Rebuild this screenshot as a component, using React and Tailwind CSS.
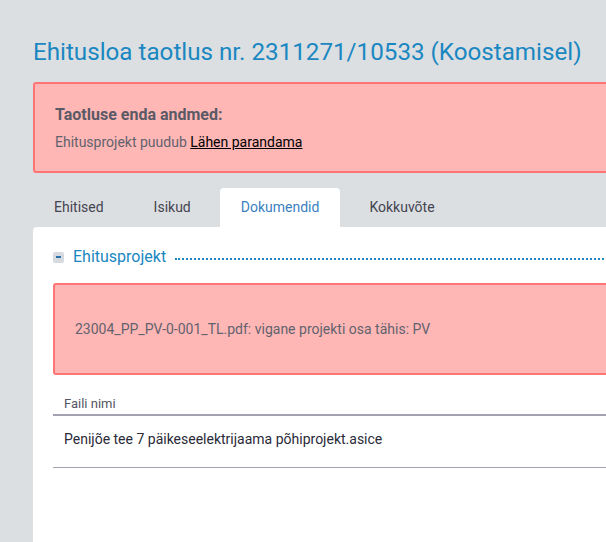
import React from 'react'

const tabs = ['Ehitised', 'Isikud', 'Dokumendid', 'Kokkuvõte']

const App = () => {
  const active = 'Dokumendid'

  return (
    <div className="min-h-[542px] w-[606px] overflow-hidden bg-[#dcdfe2] font-['Roboto',sans-serif]">
      <div className="pl-[33px] pt-[37px] w-[700px]">
        <h1 className="text-[24.2px] leading-[31px] text-[#1a87c1] whitespace-nowrap">
          Ehitusloa taotlus nr. 2311271/10533 (Koostamisel)
        </h1>

        <div className="mt-[14px] h-[91px] rounded-[3px] border-2 border-[#ff7474] bg-[#ffb7b5] px-[20px] pt-[19px]">
          <p className="text-[16px] leading-[24px] font-bold text-[#5a5a66]">Taotluse enda andmed:</p>
          <p className="mt-[5px] text-[14px] leading-[20px] text-[#62626e]">
            Ehitusprojekt puudub{' '}
            <a href="#" className="text-black underline">Lähen parandama</a>
          </p>
        </div>

        <div className="mt-[15px] flex h-[39px] gap-[8px]">
          {tabs.map((t) => (
            <div
              key={t}
              className={
                t === active
                  ? 'flex items-center rounded-t-[4px] bg-white px-[21px] text-[14px] text-[#3b7fc1]'
                  : 'flex items-center px-[21px] text-[14px] text-[#444450]'
              }
            >
              {t}
            </div>
          ))}
        </div>

        <div className="min-h-[320px] rounded-tl-[4px] bg-white pl-[20px] pt-[20px]">
          <div className="flex items-center">
            <span className="flex h-[11px] w-[11px] items-center justify-center rounded-[2px] bg-[#d6dadf]">
              <span className="h-[2px] w-[5px] bg-[#2a6fa8]"></span>
            </span>
            <span className="ml-[9px] text-[16px] leading-[20px] text-[#1a87c1]">Ehitusprojekt</span>
            <span className="ml-[9px] mt-[4px] flex-1 border-t-2 border-dotted border-[#1a87c1]"></span>
          </div>

          <div className="mt-[16px] h-[92px] rounded-[3px] border-2 border-[#ff7474] bg-[#ffb7b5] flex items-center pl-[20px]">
            <p className="text-[14px] leading-[20px] text-[#62626e]">
              23004_PP_PV-0-001_TL.pdf: vigane projekti osa tähis: PV
            </p>
          </div>

          <div className="mt-[20px]">
            <div className="border-b-2 border-[#a2a2b2] pl-[11px] pb-[1px] text-[13px] leading-[18px] text-[#555564]">
              Faili nimi
            </div>
            <div className="h-[52px] border-b border-[#a2a2b2] pl-[11px] pt-[13px] text-[14px] leading-[20px] text-[#2a2a38]">
              Penijõe tee 7 päikeseelektrijaama põhiprojekt.asice
            </div>
          </div>
        </div>
      </div>
    </div>
  )
}

export default App
